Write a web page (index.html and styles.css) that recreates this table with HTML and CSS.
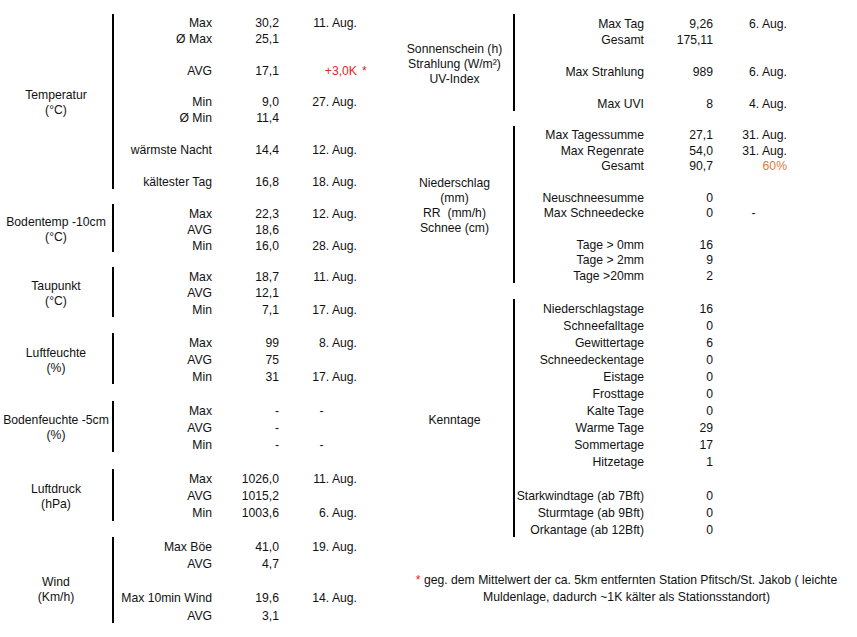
FILE: index.html
```html
<!DOCTYPE html>
<html lang="de">
<head>
<meta charset="utf-8">
<title>Monatsstatistik August</title>
<link rel="stylesheet" href="styles.css">
</head>
<body>
<div class="page">
  <div class="col left">
    <section class="grp g-temp">
      <div class="lbl">Temperatur<br>(°C)</div>
      <div class="rows">
        <div class="row"><span class="k">Max</span><span class="v">30,2</span><span class="d">11. Aug.</span></div>
        <div class="row"><span class="k">Ø Max</span><span class="v">25,1</span><span class="d"></span></div>
        <div class="row"></div>
        <div class="row"><span class="k">AVG</span><span class="v">17,1</span><span class="d red">+3,0K</span><span class="x red">*</span></div>
        <div class="row"></div>
        <div class="row"><span class="k">Min</span><span class="v">9,0</span><span class="d">27. Aug.</span></div>
        <div class="row"><span class="k">Ø Min</span><span class="v">11,4</span><span class="d"></span></div>
        <div class="row"></div>
        <div class="row"><span class="k">wärmste Nacht</span><span class="v">14,4</span><span class="d">12. Aug.</span></div>
        <div class="row"></div>
        <div class="row"><span class="k">kältester Tag</span><span class="v">16,8</span><span class="d">18. Aug.</span></div>
      </div>
    </section>
    <section class="grp g-boden">
      <div class="lbl">Bodentemp -10cm<br>(°C)</div>
      <div class="rows">
        <div class="row"><span class="k">Max</span><span class="v">22,3</span><span class="d">12. Aug.</span></div>
        <div class="row"><span class="k">AVG</span><span class="v">18,6</span><span class="d"></span></div>
        <div class="row"><span class="k">Min</span><span class="v">16,0</span><span class="d">28. Aug.</span></div>
      </div>
    </section>
    <section class="grp g-tau">
      <div class="lbl">Taupunkt<br>(°C)</div>
      <div class="rows">
        <div class="row"><span class="k">Max</span><span class="v">18,7</span><span class="d">11. Aug.</span></div>
        <div class="row"><span class="k">AVG</span><span class="v">12,1</span><span class="d"></span></div>
        <div class="row"><span class="k">Min</span><span class="v">7,1</span><span class="d">17. Aug.</span></div>
      </div>
    </section>
    <section class="grp g-luft">
      <div class="lbl">Luftfeuchte<br>(%)</div>
      <div class="rows">
        <div class="row"><span class="k">Max</span><span class="v">99</span><span class="d">8. Aug.</span></div>
        <div class="row"><span class="k">AVG</span><span class="v">75</span><span class="d"></span></div>
        <div class="row"><span class="k">Min</span><span class="v">31</span><span class="d">17. Aug.</span></div>
      </div>
    </section>
    <section class="grp g-bf">
      <div class="lbl">Bodenfeuchte -5cm<br>(%)</div>
      <div class="rows">
        <div class="row"><span class="k">Max</span><span class="v">-</span><span class="d dash">-</span></div>
        <div class="row"><span class="k">AVG</span><span class="v">-</span><span class="d"></span></div>
        <div class="row"><span class="k">Min</span><span class="v">-</span><span class="d dash">-</span></div>
      </div>
    </section>
    <section class="grp g-druck">
      <div class="lbl">Luftdruck<br>(hPa)</div>
      <div class="rows">
        <div class="row"><span class="k">Max</span><span class="v">1026,0</span><span class="d">11. Aug.</span></div>
        <div class="row"><span class="k">AVG</span><span class="v">1015,2</span><span class="d"></span></div>
        <div class="row"><span class="k">Min</span><span class="v">1003,6</span><span class="d">6. Aug.</span></div>
      </div>
    </section>
    <section class="grp g-wind">
      <div class="lbl lbl-wind">Wind<br>(Km/h)</div>
      <div class="rows">
        <div class="row"><span class="k">Max Böe</span><span class="v">41,0</span><span class="d">19. Aug.</span></div>
        <div class="row"><span class="k">AVG</span><span class="v">4,7</span><span class="d"></span></div>
        <div class="row"></div>
        <div class="row"><span class="k">Max 10min Wind</span><span class="v">19,6</span><span class="d">14. Aug.</span></div>
        <div class="row"><span class="k">AVG</span><span class="v">3,1</span><span class="d"></span></div>
      </div>
    </section>
  </div>

  <div class="col right">
    <section class="grp g-sonne">
      <div class="lbl">Sonnenschein (h)<br>Strahlung (W/m²)<br>UV-Index</div>
      <div class="rows">
        <div class="row"><span class="k">Max Tag</span><span class="v">9,26</span><span class="d">6. Aug.</span></div>
        <div class="row"><span class="k">Gesamt</span><span class="v">175,11</span><span class="d"></span></div>
        <div class="row"></div>
        <div class="row"><span class="k">Max Strahlung</span><span class="v">989</span><span class="d">6. Aug.</span></div>
        <div class="row"></div>
        <div class="row"><span class="k">Max UVI</span><span class="v">8</span><span class="d">4. Aug.</span></div>
      </div>
    </section>
    <section class="grp g-nied">
      <div class="lbl">Niederschlag<br>(mm)<br>RR&nbsp; (mm/h)<br>Schnee (cm)</div>
      <div class="rows">
        <div class="row"><span class="k">Max Tagessumme</span><span class="v">27,1</span><span class="d">31. Aug.</span></div>
        <div class="row"><span class="k">Max Regenrate</span><span class="v">54,0</span><span class="d">31. Aug.</span></div>
        <div class="row"><span class="k">Gesamt</span><span class="v">90,7</span><span class="d orange">60%</span></div>
        <div class="row"></div>
        <div class="row"><span class="k">Neuschneesumme</span><span class="v">0</span><span class="d"></span></div>
        <div class="row"><span class="k">Max Schneedecke</span><span class="v">0</span><span class="d dash">-</span></div>
        <div class="row"></div>
        <div class="row"><span class="k">Tage &gt; 0mm</span><span class="v">16</span><span class="d"></span></div>
        <div class="row"><span class="k">Tage &gt; 2mm</span><span class="v">9</span><span class="d"></span></div>
        <div class="row"><span class="k">Tage &gt;20mm</span><span class="v">2</span><span class="d"></span></div>
      </div>
    </section>
    <section class="grp g-kenn">
      <div class="lbl">Kenntage</div>
      <div class="rows">
        <div class="row"><span class="k">Niederschlagstage</span><span class="v">16</span></div>
        <div class="row"><span class="k">Schneefalltage</span><span class="v">0</span></div>
        <div class="row"><span class="k">Gewittertage</span><span class="v">6</span></div>
        <div class="row"><span class="k">Schneedeckentage</span><span class="v">0</span></div>
        <div class="row"><span class="k">Eistage</span><span class="v">0</span></div>
        <div class="row"><span class="k">Frosttage</span><span class="v">0</span></div>
        <div class="row"><span class="k">Kalte Tage</span><span class="v">0</span></div>
        <div class="row"><span class="k">Warme Tage</span><span class="v">29</span></div>
        <div class="row"><span class="k">Sommertage</span><span class="v">17</span></div>
        <div class="row"><span class="k">Hitzetage</span><span class="v">1</span></div>
        <div class="row"></div>
        <div class="row"><span class="k">Starkwindtage (ab 7Bft)</span><span class="v">0</span></div>
        <div class="row"><span class="k">Sturmtage (ab 9Bft)</span><span class="v">0</span></div>
        <div class="row"><span class="k">Orkantage (ab 12Bft)</span><span class="v">0</span></div>
      </div>
    </section>
    <p class="note"><span class="red">*</span> geg. dem Mittelwert der ca. 5km entfernten Station Pfitsch/St. Jakob ( leichte<br>Muldenlage, dadurch ~1K kälter als Stationsstandort)</p>
  </div>
</div>
</body>
</html>
```

FILE: styles.css
```css
html, body {
  margin: 0;
  padding: 0;
  background: #ffffff;
}

body {
  font-family: "Liberation Sans", Arial, sans-serif;
  font-size: 12.2px;
  color: #111111;
}

.page {
  display: flex;
  align-items: flex-start;
  width: 857px;
  height: 637px;
  overflow: hidden;
}

.col {
  display: flex;
  flex-direction: column;
  padding-top: 14px;
}

.left {
  width: 396px;
  flex: none;
}

.right {
  width: 461px;
  flex: none;
}

.grp {
  display: flex;
  align-items: stretch;
}

.lbl {
  flex: none;
  display: flex;
  align-items: center;
  justify-content: center;
  text-align: center;
  line-height: 15px;
  white-space: nowrap;
  padding-top: 4px;
  box-sizing: border-box;
}

.left .lbl { width: 112px; }
.right .lbl { width: 117px; }

.lbl-wind {
  padding-top: 21px;
}

.rows {
  border-left: 2px solid #000000;
  display: flex;
  flex-direction: column;
}

.row {
  display: flex;
  height: var(--rh);
  line-height: var(--rh);
  padding-top: 2px;
  box-sizing: border-box;
  white-space: nowrap;
}

.row span { display: block; }

.k { text-align: right; }
.v { text-align: right; }
.d { text-align: right; }

.left .k { width: 98px; }
.left .v { width: 67px; }
.left .d { width: 78px; }

.right .k { width: 129px; }
.right .v { width: 69px; }
.right .d { width: 74px; }

.d.dash {
  text-align: center;
  padding-left: 7px;
  box-sizing: border-box;
}

.x {
  padding-left: 5px;
}

.red { color: #e3262b; }
.orange { color: #e2783b; }

/* per-group row heights and spacing */
.g-temp  { --rh: 15.9px; }
.g-boden { --rh: 16px;   margin-top: 15px; }
.g-tau   { --rh: 16.7px; margin-top: 15px; }
.g-luft  { --rh: 17px;   margin-top: 16.5px; }
.g-bf    { --rh: 17px;   margin-top: 16.5px; }
.g-druck { --rh: 17.3px; margin-top: 17px; }
.g-wind  { --rh: 17.2px; margin-top: 16px; }

.g-sonne { --rh: 16.1px; }
.g-nied  { --rh: 15.7px; margin-top: 15.4px; }
.g-kenn  { --rh: 17px;   margin-top: 16.3px; }

.note {
  margin: 35px 0 0 0;
  text-align: center;
  line-height: 16.5px;
  white-space: nowrap;
}
```
